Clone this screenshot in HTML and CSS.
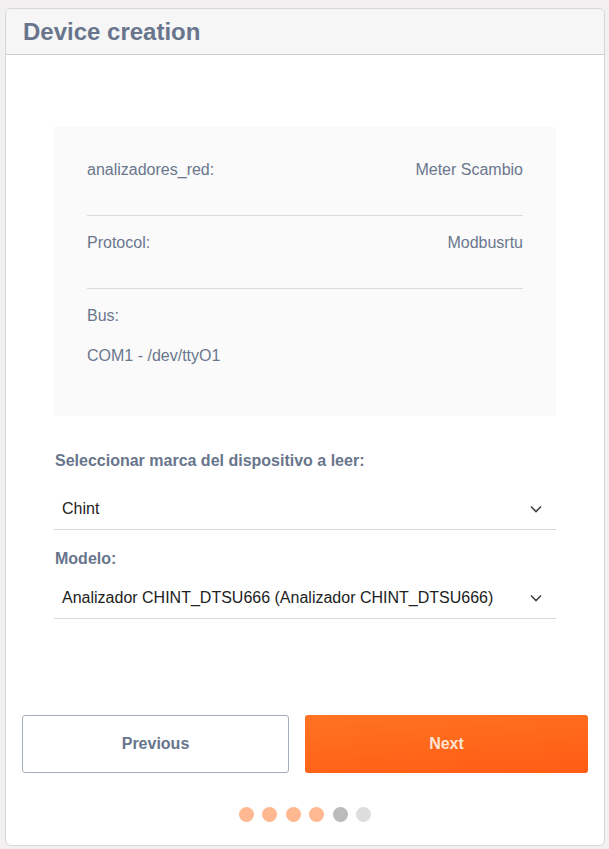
FILE: index.html
```html
<!DOCTYPE html>
<html lang="es">
<head>
<meta charset="utf-8">
<title>Device creation</title>
<link rel="stylesheet" href="styles.css">
</head>
<body>
<div class="card">
  <div class="card-header">
    <h1 class="title">Device creation</h1>
  </div>
  <div class="card-body">
    <div class="form">
      <div class="summary">
        <div class="row">
          <span class="label">analizadores_red:</span>
          <span class="value">Meter Scambio</span>
        </div>
        <div class="row">
          <span class="label">Protocol:</span>
          <span class="value">Modbusrtu</span>
        </div>
        <div class="bus">
          <div class="label">Bus:</div>
          <div class="label bus-value">COM1 - /dev/ttyO1</div>
        </div>
      </div>

      <div class="field-label first">Seleccionar marca del dispositivo a leer:</div>
      <div class="select">
        <span class="select-text">Chint</span>
        <svg class="chevron" width="12" height="8" viewBox="0 0 12 8"><path d="M1 1.5 L6 6.5 L11 1.5" fill="none" stroke="#444" stroke-width="1.6"/></svg>
      </div>

      <div class="field-label second">Modelo:</div>
      <div class="select select-model">
        <span class="select-text">Analizador CHINT_DTSU666 (Analizador CHINT_DTSU666)</span>
        <svg class="chevron" width="12" height="8" viewBox="0 0 12 8"><path d="M1 1.5 L6 6.5 L11 1.5" fill="none" stroke="#444" stroke-width="1.6"/></svg>
      </div>
    </div>

    <div class="actions">
      <button class="btn btn-prev">Previous</button>
      <button class="btn btn-next">Next</button>
    </div>

    <div class="dots">
      <span class="dot done"></span>
      <span class="dot done"></span>
      <span class="dot done"></span>
      <span class="dot done"></span>
      <span class="dot current"></span>
      <span class="dot todo"></span>
    </div>
  </div>
</div>
</body>
</html>
```

FILE: styles.css
```css
* { box-sizing: border-box; }

html, body {
  margin: 0;
  padding: 0;
  background: #f2f0f0;
  font-family: "Liberation Sans", Arial, sans-serif;
}

body {
  padding: 8px 0 4px 5px;
}

.card {
  width: 600px;
  height: 838px;
  background: #ffffff;
  border: 1px solid #d6d6d6;
  border-radius: 6px;
  overflow: hidden;
  display: flex;
  flex-direction: column;
}

.card-header {
  height: 46px;
  background: #f6f6f6;
  border-bottom: 1px solid #d0d0d0;
  display: flex;
  align-items: center;
  padding-left: 17px;
}

.title {
  margin: 0;
  font-size: 24px;
  font-weight: bold;
  color: #68758c;
  line-height: 28px;
  padding-top: 1px;
}

.card-body {
  padding: 0 16px;
  display: flex;
  flex-direction: column;
}

.form {
  margin: 72px 32px 0;
}

.summary {
  background: #fafafa;
  padding: 32px 33px 49px;
}

.row {
  display: flex;
  justify-content: space-between;
  padding: 16px 0 34px;
  border-bottom: 1px solid #d9dce2;
}

.row:first-child {
  padding-top: 0;
}

.label, .value {
  font-size: 16px;
  line-height: 22px;
  color: #6a778d;
}

.bus {
  padding-top: 16px;
}

.bus-value {
  margin-top: 18px;
}

.field-label {
  font-size: 16px;
  font-weight: bold;
  line-height: 18px;
  color: #68758c;
  padding-left: 1px;
}

.field-label.first {
  margin-top: 36px;
}

.field-label.second {
  margin-top: 20px;
}

.select {
  height: 42px;
  margin-top: 18px;
  border-bottom: 1px solid #d5d8dd;
  display: flex;
  align-items: center;
  justify-content: space-between;
  padding: 0 14px 0 8px;
}

.select-model {
  margin-top: 9px;
}

.select-text {
  font-size: 16px;
  line-height: 20px;
  color: #222222;
}

.chevron {
  display: block;
  flex: none;
}

.actions {
  margin-top: 96px;
  display: flex;
  gap: 16px;
}

.btn {
  height: 58px;
  border-radius: 3px;
  font-family: "Liberation Sans", Arial, sans-serif;
  font-size: 16px;
  font-weight: bold;
  cursor: pointer;
}

.btn-prev {
  flex: 0 0 267px;
  background: #ffffff;
  border: 1px solid #a3adbb;
  color: #68758c;
}

.btn-next {
  flex: 1;
  border: none;
  background: linear-gradient(175deg, #ff7322 0%, #ff5c14 100%);
  color: #ffe4d4;
}

.dots {
  margin-top: 34px;
  display: flex;
  justify-content: center;
  gap: 8.5px;
}

.dot {
  width: 15px;
  height: 15px;
  border-radius: 50%;
}

.dot.done { background: #ffb890; }
.dot.current { background: #bbbbbb; }
.dot.todo { background: #dddddd; }
```
